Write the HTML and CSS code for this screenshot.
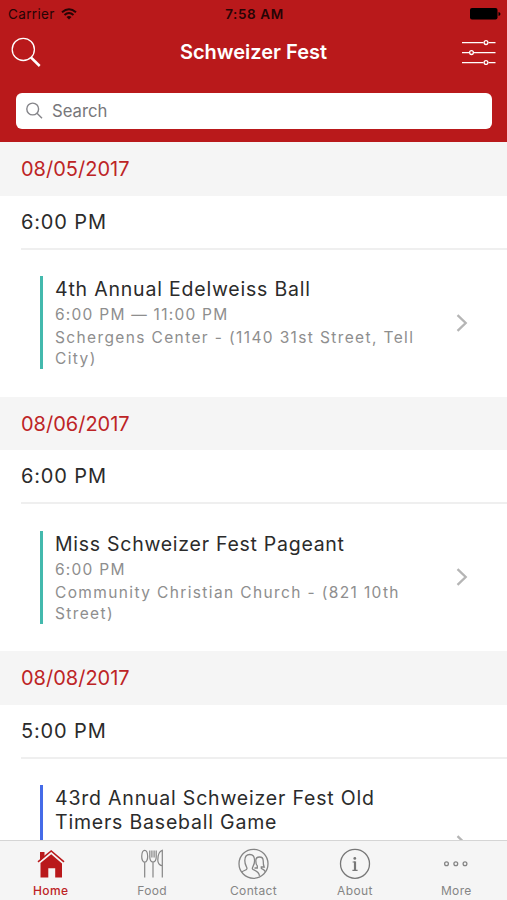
FILE: index.html
```html
<!DOCTYPE html>
<html lang="en">
<head>
<meta charset="utf-8">
<title>Schweizer Fest</title>
<link rel="stylesheet" href="styles.css">
</head>
<body>
<div class="app">
  <header class="header">
    <div class="status">
      <div class="carrier"><span>Carrier</span>
        <svg width="16" height="12" viewBox="0 0 16 12" fill="none" stroke="#260405" stroke-width="2"><path d="M1 4.2Q8-1.8 15 4.2M3.5 7Q8 3 12.5 7"/><path d="M8 11.5L5.5 9Q8 7 10.5 9Z" fill="#260405" stroke="none"/></svg>
      </div>
      <span class="clock">7:58 AM</span>
      <svg class="battery" width="31" height="12" viewBox="0 0 31 12"><rect width="27.5" height="11.5" rx="2"/><path d="M28.5 4Q30.5 4.3 30.5 6T28.5 8Z"/></svg>
    </div>
    <div class="navbar">
      <svg width="30" height="30" viewBox="0 0 30 30" fill="none" stroke="#fff"><circle cx="12.3" cy="12.4" r="11.1" stroke-width="1.3"/><path d="M20 20.5L28.7 29" stroke-width="2.5"/></svg>
      <h1 class="title">Schweizer Fest</h1>
      <svg width="34" height="26" viewBox="0 0 34 26" fill="none" stroke="#fff" stroke-width="1.3"><path d="M0 3.6H21.5M26.5 3.6H33.5M0 13.6H7M12 13.6H33.5M0 23.6H21.5M26.5 23.6H33.5"/><circle cx="24" cy="3.6" r="1.9"/><circle cx="9.5" cy="13.6" r="1.9"/><circle cx="24" cy="23.6" r="1.9"/></svg>
    </div>
    <div class="search">
      <svg width="17" height="17" viewBox="0 0 17 17" fill="none" stroke="#85858a" stroke-width="1.4"><circle cx="6.7" cy="7" r="5.9"/><path d="M11 11.3L16 16.3"/></svg>
      <span>Search</span>
    </div>
  </header>
  <main class="list">
    <section class="day">
      <h2 class="date">08/05/2017</h2>
      <div class="time">6:00 PM</div>
      <article class="event">
        <div class="info">
          <h3 class="name">4th Annual Edelweiss Ball</h3>
          <p class="hours">6:00 PM — 11:00 PM</p>
          <p class="place">Schergens Center - (1140 31st Street, Tell<br>City)</p>
        </div>
        <svg class="chevron" width="12" height="18" viewBox="0 0 12 18"><path d="M1.5 1.2L9.7 9L1.5 16.8"/></svg>
      </article>
    </section>
    <section class="day">
      <h2 class="date">08/06/2017</h2>
      <div class="time">6:00 PM</div>
      <article class="event">
        <div class="info">
          <h3 class="name pageant">Miss Schweizer Fest Pageant</h3>
          <p class="hours">6:00 PM</p>
          <p class="place">Community Christian Church - (821 10th<br>Street)</p>
        </div>
        <svg class="chevron" width="12" height="18" viewBox="0 0 12 18"><path d="M1.5 1.2L9.7 9L1.5 16.8"/></svg>
      </article>
    </section>
    <section class="day">
      <h2 class="date">08/08/2017</h2>
      <div class="time">5:00 PM</div>
      <article class="event tall">
        <div class="info sports">
          <h3 class="name">43rd Annual Schweizer Fest Old<br>Timers Baseball Game</h3>
        </div>
        <svg class="chevron" width="12" height="18" viewBox="0 0 12 18"><path d="M1.5 1.2L9.7 9L1.5 16.8"/></svg>
      </article>
    </section>
  </main>
  <nav class="tabs">
    <a class="tab active">
      <svg width="32" height="32" viewBox="0 0 32 32"><path d="M5 5H9.5V10L5 14ZM5.5 16L16.2 7.2L27 16.5V30.5H20.2V21.3H13.3V30.5H5.5V16Z" fill="#b9191b"/><path d="M3 14.8L16.2 4L29 14.8" fill="none" stroke="#b9191b" stroke-width="1.6"/></svg>
      <span>Home</span>
    </a>
    <a class="tab">
      <svg width="32" height="32" viewBox="0 0 32 32" fill="none" stroke="#858585" stroke-width="1.2"><path d="M8.7 15.5V30.5M8.7 3.3C5 3.3 4.5 15.2 8.7 15.2S12.4 3.3 8.7 3.3ZM17 15V30.5M13.8 3.5V10Q13.8 14.8 17 15Q20.2 14.8 20.2 10V3.5M15.9 3.5V10.5M18.1 3.5V10.5M26.3 30.5V3.3C23 4.5 21.8 9 21.8 13Q21.8 18 26.3 18.8"/></svg>
      <span>Food</span>
    </a>
    <a class="tab">
      <svg width="32" height="32" viewBox="0 0 32 32" fill="none" stroke="#858585" stroke-width="1.3"><circle cx="16.5" cy="16.8" r="14.5"/><path d="M4.7 25.2C6 23.3 10 23.5 10 21.5C10 19.5 7.8 18.5 7.8 13.5C7.8 9.5 9.5 7.5 12.8 7.5S17.6 9.5 17.6 13.5C17.6 18.5 15.3 19.5 15.3 21.5C15.3 23.5 21.5 23 22.5 28.8"/><path d="M17.5 21H20.3V18.9C19 17.5 18.8 16 18.8 13.7C18.8 11.5 20 10 22.5 10S26.2 11.5 26.2 13.7C26.2 16.5 26.2 18 27.2 20H24.3V21.3C25.3 22.5 27.2 22 28.3 24.8"/></svg>
      <span>Contact</span>
    </a>
    <a class="tab">
      <svg width="32" height="32" viewBox="0 0 32 32" fill="none" stroke="#777" stroke-width="1.3"><circle cx="16" cy="16.8" r="14.5"/><circle cx="15.8" cy="11.4" r="1.4" fill="#777" stroke="none"/><path d="M13.6 15H16M13.4 23.3H18.6" stroke-width="1.2"/><path d="M16 14.4V23" stroke-width="2.2"/></svg>
      <span>About</span>
    </a>
    <a class="tab">
      <svg width="32" height="32" viewBox="0 0 32 32" fill="none" stroke="#858585" stroke-width="1.3"><circle cx="6.5" cy="16.7" r="1.9"/><circle cx="15.8" cy="16.7" r="1.9"/><circle cx="25" cy="16.7" r="1.9"/></svg>
      <span>More</span>
    </a>
  </nav>
</div>
</body>
</html>
```

FILE: styles.css
```css
* { box-sizing: border-box; margin: 0; }
body { font-family: Inter, sans-serif; background: #fff; color: #2b2b2b; }
svg { display: block; flex: none; }
.app { height: 900px; display: flex; flex-direction: column; overflow: hidden; }
.header { height: 142.4px; flex: none; background: #b9191b; }
.status { height: 28px; padding: 0 6px 0 8px; display: grid; grid-template-columns: 1fr auto 1fr; align-items: center; font-size: 13.5px; color: #260405; }
.carrier { display: flex; align-items: center; gap: 6px; letter-spacing: .35px; }
.clock { font-weight: 600; font-size: 13.5px; letter-spacing: .6px; }
.battery { justify-self: end; }
.navbar { height: 48px; padding: 0 11px; display: grid; grid-template-columns: 1fr auto 1fr; align-items: center; color: #fff; }
.navbar svg:last-child { justify-self: end; }
.title { font-size: 20px; font-weight: 600; }
.search { height: 36.5px; margin: 16.5px 15px 0 15.5px; padding: 0 10px; border-radius: 6px; background: #fff; display: flex; align-items: center; gap: 9.5px; font-size: 16.7px; color: #77777a; }
.list { flex: 1; min-height: 0; overflow: hidden; }
.day { height: 254.5px; }
.date { height: 53.5px; padding-left: 21px; background: #f5f5f5; color: #bd2426; font-size: 20px; line-height: 54px; font-weight: 400; }
.time { height: 54px; margin-left: 21px; border-bottom: 2px solid #efefef; font-size: 20px; line-height: 53px; letter-spacing: .85px; }
.event { display: flex; align-items: center; justify-content: space-between; margin: 26.4px 39px 0 40px; height: 93px; }
.info { align-self: stretch; border-left: 3px solid #43b9ad; padding-left: 12px; white-space: nowrap; }
.sports { border-color: #456be8; }
.name { font-size: 19.5px; line-height: 24px; font-weight: 400; letter-spacing: .8px; padding-top: 1px; }
.pageant { letter-spacing: .73px; }
.hours, .place { color: #8e8e8e; font-size: 15.5px; line-height: 21px; letter-spacing: 1.37px; }
.hours { line-height: 24px; padding-top: 2px; letter-spacing: 1.25px; }
.tall { height: 117px; }
.chevron { fill: none; stroke: #b5b5b5; stroke-width: 2.3; }
.tabs { height: 60px; flex: none; border-top: 1px solid #d5d5d5; background: #f5f5f5; display: grid; grid-template-columns: repeat(5, 1fr); padding-top: 6px; }
.tab { display: flex; flex-direction: column; align-items: center; color: #858585; font-size: 12px; letter-spacing: .35px; gap: 4px; }
.tab span { line-height: 15px; }
.active { color: #bd2426; font-weight: 500; }
```
